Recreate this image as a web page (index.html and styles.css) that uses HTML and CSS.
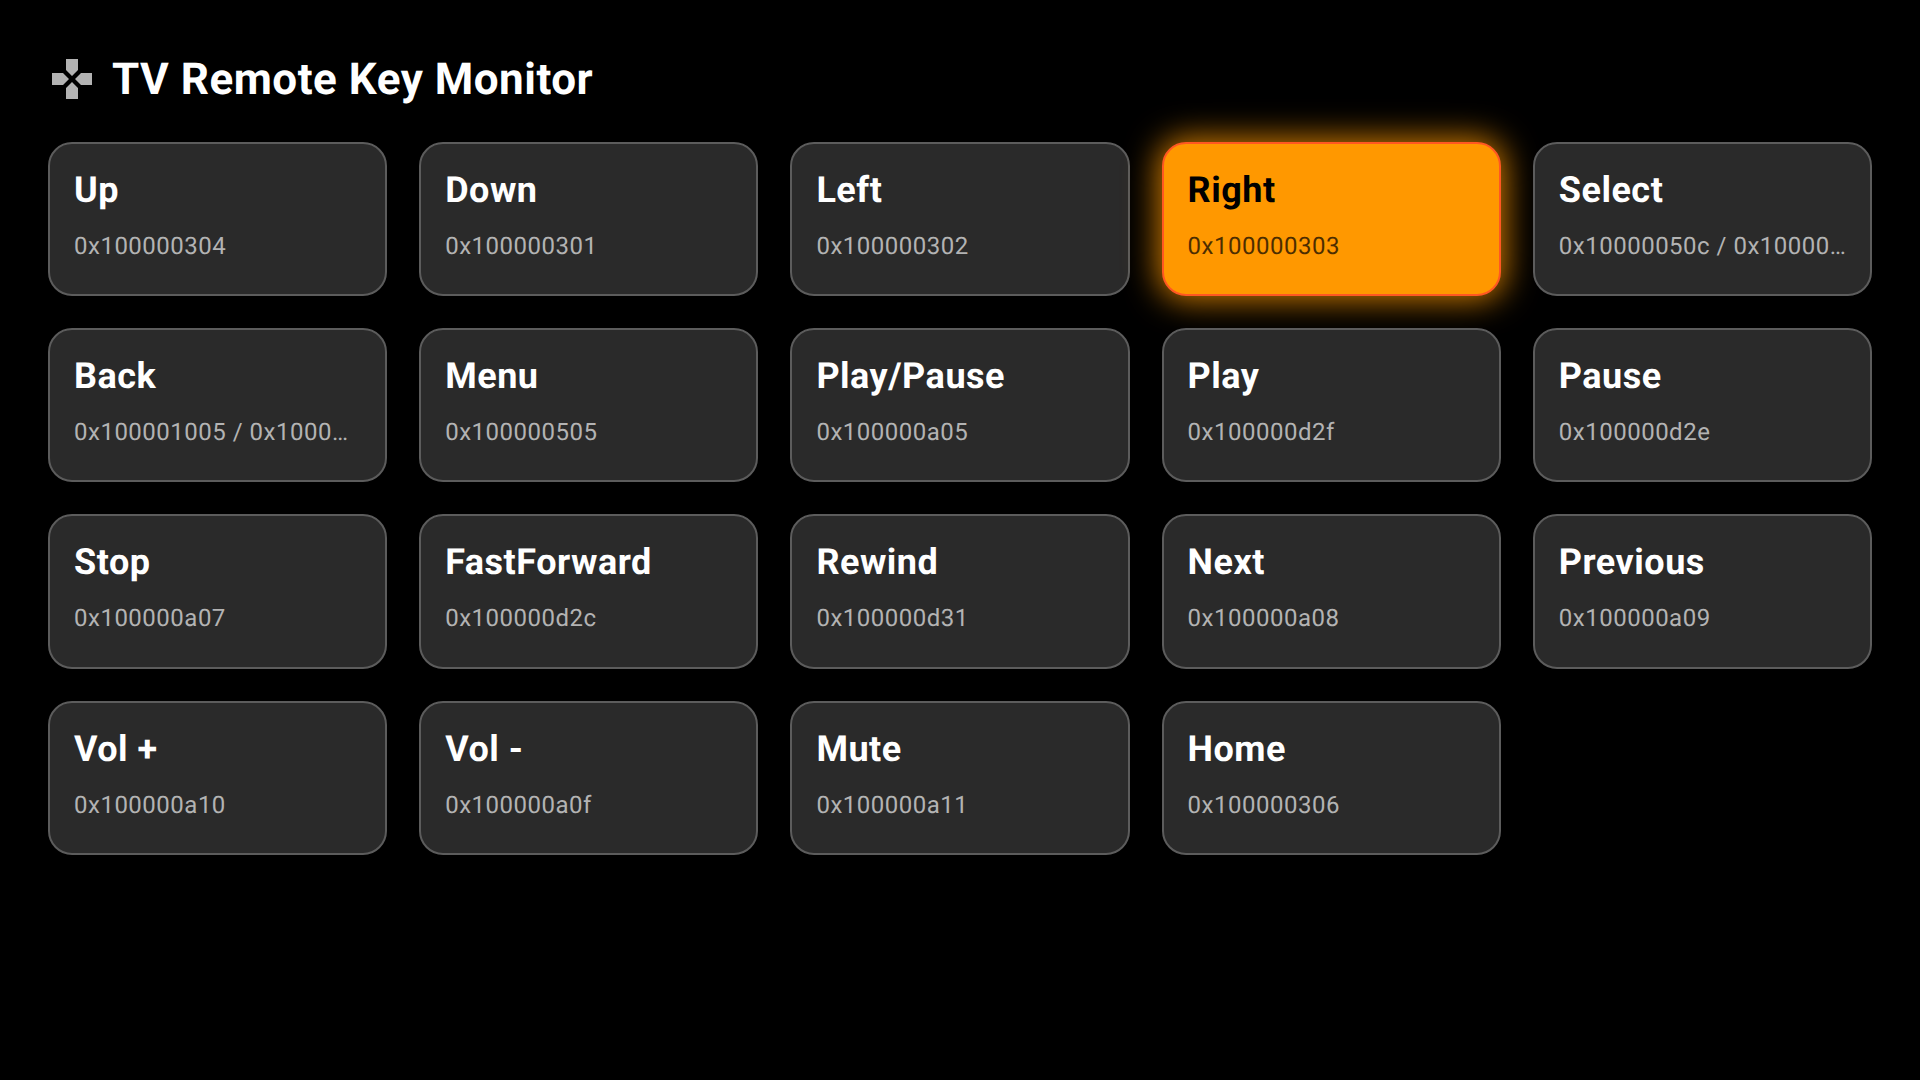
FILE: index.html
```html
<!DOCTYPE html>
<html lang="en">
<head>
<meta charset="utf-8">
<title>TV Remote Key Monitor</title>
<link rel="stylesheet" href="styles.css">
</head>
<body>
<main class="page">
  <header class="header">
    <svg class="icon" viewBox="0 0 24 24"><path d="M15 7.5V2H9v5.5l3 3 3-3zM7.5 9H2v6h5.5l3-3-3-3zM9 16.5V22h6v-5.5l-3-3-3 3zM16.5 9l-3 3 3 3H22V9h-5.5z"/></svg>
    <h1 class="title">TV Remote Key Monitor</h1>
  </header>
  <section class="grid">
    <div class="card"><div class="name">Up</div><div class="code">0x100000304</div></div>
    <div class="card"><div class="name">Down</div><div class="code">0x100000301</div></div>
    <div class="card"><div class="name">Left</div><div class="code">0x100000302</div></div>
    <div class="card active"><div class="name">Right</div><div class="code">0x100000303</div></div>
    <div class="card"><div class="name">Select</div><div class="code">0x10000050c / 0x10000050d</div></div>
    <div class="card"><div class="name">Back</div><div class="code">0x100001005 / 0x100000008</div></div>
    <div class="card"><div class="name">Menu</div><div class="code">0x100000505</div></div>
    <div class="card"><div class="name">Play/Pause</div><div class="code">0x100000a05</div></div>
    <div class="card"><div class="name">Play</div><div class="code">0x100000d2f</div></div>
    <div class="card"><div class="name">Pause</div><div class="code">0x100000d2e</div></div>
    <div class="card"><div class="name">Stop</div><div class="code">0x100000a07</div></div>
    <div class="card"><div class="name">FastForward</div><div class="code">0x100000d2c</div></div>
    <div class="card"><div class="name">Rewind</div><div class="code">0x100000d31</div></div>
    <div class="card"><div class="name">Next</div><div class="code">0x100000a08</div></div>
    <div class="card"><div class="name">Previous</div><div class="code">0x100000a09</div></div>
    <div class="card"><div class="name">Vol +</div><div class="code">0x100000a10</div></div>
    <div class="card"><div class="name">Vol -</div><div class="code">0x100000a0f</div></div>
    <div class="card"><div class="name">Mute</div><div class="code">0x100000a11</div></div>
    <div class="card"><div class="name">Home</div><div class="code">0x100000306</div></div>
  </section>
</main>
</body>
</html>
```
FILE: styles.css
```css
* { box-sizing: border-box; }
html, body { margin: 0; height: 100%; background: #000; }
body { font-family: Roboto, "Liberation Sans", sans-serif; overflow: hidden; text-rendering: geometricPrecision; }
.page { padding: 55px 48px 48px; }
.header { display: flex; align-items: center; gap: 16px; height: 48px; margin-bottom: 39px; }
.icon { width: 48px; height: 48px; fill: #b3b3b3; flex: none; }
.title { margin: 0; font-size: 44px; font-weight: 700; line-height: 52px; letter-spacing: 0.5px; color: #fff; }
.grid { display: grid; grid-template-columns: repeat(5, minmax(0, 1fr)); gap: 32px; }
.card { height: 154.2px; padding: 24px; background: #2a2a2a; border: 2px solid #5c5c5c; border-radius: 24px; }
.name { font-size: 36px; font-weight: 700; line-height: 44px; letter-spacing: 0.5px; color: #fff; }
.code { margin-top: 20px; font-size: 24px; line-height: 28px; color: #b3b3b3; letter-spacing: 0.5px; white-space: nowrap; overflow: hidden; text-overflow: ellipsis; }
.active { background: #ff9800; border-color: #ff5722; box-shadow: 0 0 32px 4px rgba(255, 152, 0, 0.8); }
.active .name { color: #000; }
.active .code { color: #000; opacity: 0.7; }
```
